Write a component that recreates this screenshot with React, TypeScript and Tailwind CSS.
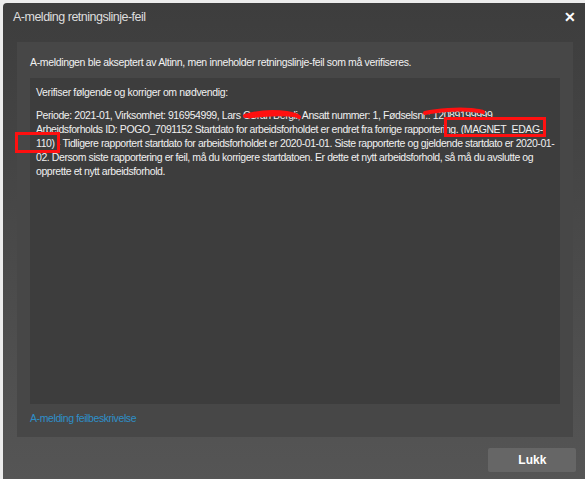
import React from "react";

export default function App() {
  return (
    <div
      className="w-[585px] h-[479px] bg-[#ececec] pt-[3px] pl-[3px] flex overflow-hidden"
      style={{ fontFamily: '"Liberation Sans", Arial, sans-serif' }}
    >
      <div className="flex-1 flex flex-col rounded-tl-[4px] bg-gradient-to-b from-[#3d3d3d] to-[#555555]">
        <div className="h-[28px] flex items-center justify-between pl-[10px] pr-[9px] shrink-0">
          <span className="text-[12.5px] tracking-[-0.5px] text-[#dedede]">A-melding retningslinje-feil</span>
          <span className="text-[14px] font-bold text-white leading-none">✕</span>
        </div>
        <div className="mt-[11px] ml-[14px] mr-[12px] bg-[#474747] px-[13px] pt-[13px] pb-[12px] flex flex-col">
          <p className="text-[10.5px] tracking-[-0.35px] text-[#f2f2f2] leading-[14px]">
            A-meldingen ble akseptert av Altinn, men inneholder retningslinje-feil som må verifiseres.
          </p>
          <div className="relative mt-[9px] h-[326px] bg-[#3d3d3d] px-[6px] pt-[7px] text-[10.5px] tracking-[-0.35px] leading-[14px] text-[#f0f0f0]">
            <p>Verifiser følgende og korriger om nødvendig:</p>
            <p className="mt-[9px] whitespace-nowrap tracking-[-0.42px]">
              Periode: 2021-01, Virksomhet: 916954999, Lars Gøran Bergli, Ansatt nummer: 1, Fødselsnr.: 12089199999
              <br />
              Arbeidsforholds ID: POGO_7091152 Startdato for arbeidsforholdet er endret fra forrige rapportering. (MAGNET_EDAG-
              <br />
              110) - Tidligere rapportert startdato for arbeidsforholdet er 2020-01-01. Siste rapporterte og gjeldende startdato er 2020-01-
              <br />
              02. Dersom siste rapportering er feil, må du korrigere startdatoen. Er dette et nytt arbeidsforhold, så må du avslutte og
              <br />
              opprette et nytt arbeidsforhold.
            </p>
            <svg className="absolute left-[213px] top-[31px]" width="58" height="12" viewBox="0 0 58 12">
              <path d="M2 7 C 15 3, 30 2, 44 4 C 50 5, 54 6, 56 8" stroke="#ff1010" strokeWidth="4" fill="none" strokeLinecap="round" />
              <path d="M6 8 C 20 6, 40 5, 54 7" stroke="#ff1010" strokeWidth="3" fill="none" strokeLinecap="round" />
            </svg>
            <svg className="absolute left-[393px] top-[29px]" width="62" height="10" viewBox="0 0 62 10">
              <path d="M2 6 C 15 3, 35 2, 48 3 C 55 4, 58 4, 60 5" stroke="#ff1010" strokeWidth="4" fill="none" strokeLinecap="round" />
            </svg>
            <div className="absolute left-[414px] top-[39px] w-[102px] h-[20px] border-[3px] border-[#ff1010]" />
            <div className="absolute left-[-15px] top-[54px] w-[45px] h-[21px] border-[3px] border-[#ff1010]" />
          </div>
          <a className="mt-[7px] text-[10.5px] tracking-[-0.4px] text-[#2e8fc9] leading-[14px]">A-melding feilbeskrivelse</a>
        </div>
        <div className="flex-1 flex items-end justify-end pr-[9px] pb-[7px]">
          <button className="w-[88px] h-[24px] bg-[#666666] text-white text-[12px] font-bold rounded-[2px]">
            Lukk
          </button>
        </div>
      </div>
    </div>
  );
}
